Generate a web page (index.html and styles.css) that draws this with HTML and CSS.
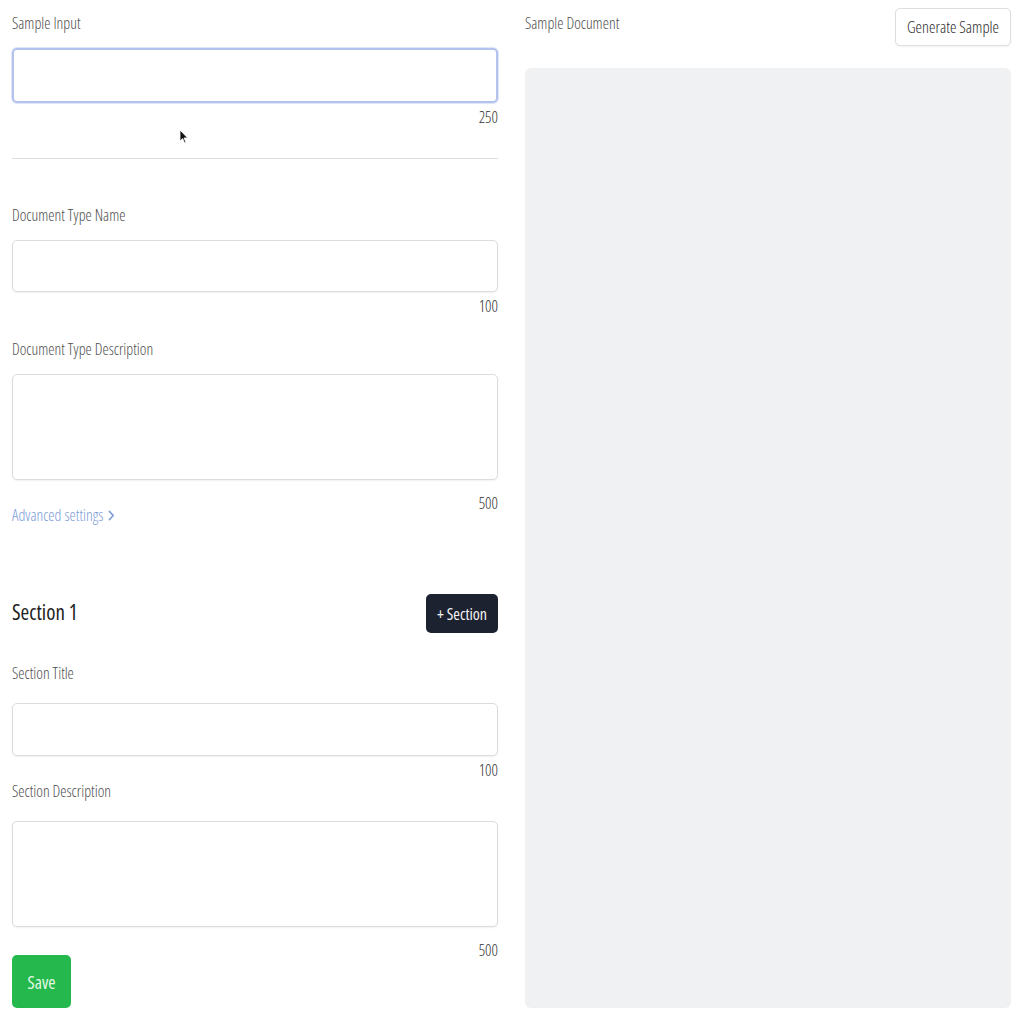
FILE: index.html
```html
<!DOCTYPE html>
<html>
<head>
<meta charset="utf-8">
<link rel="stylesheet" href="styles.css">
</head>
<body>
<div class="page">
  <div class="col left">
    <div class="label first">Sample Input</div>
    <div class="field focused tall"></div>
    <div class="counter">250</div>
    <div class="divider"></div>

    <div class="label l2">Document Type Name</div>
    <div class="field h52"></div>
    <div class="counter">100</div>

    <div class="label l3">Document Type Description</div>
    <div class="field area"></div>
    <div class="row-adv">
      <a class="adv">Advanced settings <svg class="chev" width="7" height="11" viewBox="0 0 7 11"><path d="M1.5 1.5 L5.2 5.5 L1.5 9.5" fill="none" stroke="#7f9fd9" stroke-width="1.8" stroke-linecap="round" stroke-linejoin="round"/></svg></a>
      <div class="counter inline">500</div>
    </div>

    <div class="section-head">
      <div class="section-title">Section 1</div>
      <button class="btn-dark">+ Section</button>
    </div>

    <div class="label l4">Section Title</div>
    <div class="field h53"></div>
    <div class="counter">100</div>

    <div class="label l5">Section Description</div>
    <div class="field area"></div>
    <div class="row-save">
      <button class="btn-save">Save</button>
      <div class="counter inline">500</div>
    </div>
  </div>

  <div class="col right">
    <div class="right-head">
      <div class="label">Sample Document</div>
      <button class="btn-light">Generate Sample</button>
    </div>
    <div class="panel"></div>
  </div>
</div>
<svg class="cursor" width="10" height="16" viewBox="0 0 10 16"><path d="M1 1 L1 12 L3.6 9.6 L5.6 14 L7 13.4 L5 9 L8.6 9 Z" fill="#111" stroke="#fff" stroke-width="0.8"/></svg>
</body>
</html>
```

FILE: styles.css
```css
html, body {
  margin: 0;
  padding: 0;
  background: #ffffff;
}
body {
  font-family: "Open Sans", "Noto Sans", sans-serif;
  font-stretch: 82%;
  font-weight: 350;
  color: #4a4a4a;
  position: relative;
  width: 1024px;
  height: 1024px;
  overflow: hidden;
}
.page {
  display: flex;
  gap: 27px;
  padding: 0 13px 0 12px;
}
.col {
  width: 486px;
  display: flex;
  flex-direction: column;
}
.label {
  font-size: 15.8px;
  line-height: 20px;
  color: #4e4e4e;
  height: 20px;
}
.label.first { margin-top: 13px; margin-bottom: 15px; }
.label.l2 { margin-top: 46px; margin-bottom: 15px; }
.label.l3 { margin-top: 23px; margin-bottom: 15px; }
.label.l4 { margin-top: 30px; margin-bottom: 20px; }
.label.l5 { margin-top: 1px; margin-bottom: 20px; }

.field {
  box-sizing: border-box;
  border: 1px solid #dcdcdc;
  border-radius: 5px;
  background: #fff;
  box-shadow: 0 1px 2px rgba(0,0,0,0.06);
}
.field.tall { height: 55px; }
.field.h52 { height: 52px; }
.field.h53 { height: 53px; }
.field.area { height: 106px; }
.field.focused {
  border: 2px solid #b3c3ee;
  box-shadow: 0 0 0 1px #dfe6f8;
}
.counter {
  font-size: 15.8px;
  line-height: 20px;
  height: 20px;
  text-align: right;
  color: #333333;
  margin-top: 4px;
}
.counter.inline { margin-top: 0; }
.divider {
  height: 1px;
  background: #dedede;
  margin-top: 31px;
}
.row-adv {
  display: flex;
  justify-content: space-between;
  align-items: flex-start;
  margin-top: 13px;
}
.adv {
  margin-top: 12px;
  font-size: 15.8px;
  line-height: 20px;
  color: #7c9cd8;
  text-decoration: none;
  display: flex;
  align-items: center;
}
.chev {
  margin-left: 5px;
  margin-top: 1px;
}
.section-head {
  margin-top: 69px;
  height: 39px;
  display: flex;
  justify-content: space-between;
  align-items: center;
}
.section-title {
  font-size: 21px;
  color: #1e1e1e;
  font-weight: 400;
  margin-top: -4px;
}
.btn-dark {
  font-family: inherit;
  font-stretch: 80%;
  font-weight: 400;
  height: 39px;
  width: 72px;
  background: #1d2231;
  color: #f4f4f4;
  border: none;
  border-radius: 5px;
  font-size: 16px;
  padding: 0;
}
.row-save {
  display: flex;
  justify-content: space-between;
  align-items: flex-start;
  margin-top: 13px;
}
.btn-save {
  font-family: inherit;
  font-stretch: 80%;
  font-weight: 400;
  margin-top: 15px;
  width: 59px;
  height: 53px;
  background: #25b84c;
  color: #e6f9e8;
  border: none;
  border-radius: 5px;
  font-size: 17.5px;
  padding: 0;
}
.right-head {
  margin-top: 8px;
  display: flex;
  justify-content: space-between;
  align-items: flex-start;
  height: 38px;
}
.right-head .label { margin-top: 5px; }
.btn-light {
  font-family: inherit;
  font-stretch: 80%;
  font-weight: 350;
  height: 38px;
  width: 116px;
  background: #fff;
  color: #2a2a2a;
  border: 1px solid #dedede;
  border-radius: 5px;
  font-size: 16.3px;
  padding: 0;
  box-shadow: 0 1px 2px rgba(0,0,0,0.05);
}
.panel {
  margin-top: 22px;
  height: 940px;
  background: #f0f1f3;
  border-radius: 6px;
}
.cursor {
  position: absolute;
  left: 179px;
  top: 129px;
}
```
